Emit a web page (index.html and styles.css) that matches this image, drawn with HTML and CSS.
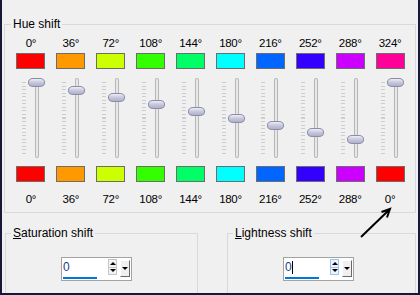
FILE: index.html
```html
<!DOCTYPE html>
<html>
<head>
    <title>Hue / Saturation / Lightness</title>
    <link rel="stylesheet" href="styles.css">
</head>
<body>
<div class="window">
    <!-- Hue shift -->
    <fieldset class="group hue-group">
        <legend>Hue shift</legend>
        <div class="hue-grid">
            <div class="hue-col">
                <div class="deg top">0°</div>
                <div class="swatch" style="background: #ff0000"></div>
                <div class="slider"><div class="ticks"></div><div class="track"><div class="thumb" style="top: 0px"></div></div></div>
                <div class="swatch" style="background: #ff0000"></div>
                <div class="deg bottom">0°</div>
            </div>
            <div class="hue-col">
                <div class="deg top">36°</div>
                <div class="swatch" style="background: #ff9900"></div>
                <div class="slider"><div class="ticks"></div><div class="track"><div class="thumb" style="top: 8px"></div></div></div>
                <div class="swatch" style="background: #ff9900"></div>
                <div class="deg bottom">36°</div>
            </div>
            <div class="hue-col">
                <div class="deg top">72°</div>
                <div class="swatch" style="background: #ccff00"></div>
                <div class="slider"><div class="ticks"></div><div class="track"><div class="thumb" style="top: 15px"></div></div></div>
                <div class="swatch" style="background: #ccff00"></div>
                <div class="deg bottom">72°</div>
            </div>
            <div class="hue-col">
                <div class="deg top">108°</div>
                <div class="swatch" style="background: #33ff00"></div>
                <div class="slider"><div class="ticks"></div><div class="track"><div class="thumb" style="top: 22px"></div></div></div>
                <div class="swatch" style="background: #33ff00"></div>
                <div class="deg bottom">108°</div>
            </div>
            <div class="hue-col">
                <div class="deg top">144°</div>
                <div class="swatch" style="background: #00ff66"></div>
                <div class="slider"><div class="ticks"></div><div class="track"><div class="thumb" style="top: 29px"></div></div></div>
                <div class="swatch" style="background: #00ff66"></div>
                <div class="deg bottom">144°</div>
            </div>
            <div class="hue-col">
                <div class="deg top">180°</div>
                <div class="swatch" style="background: #00ffff"></div>
                <div class="slider"><div class="ticks"></div><div class="track"><div class="thumb" style="top: 36px"></div></div></div>
                <div class="swatch" style="background: #00ffff"></div>
                <div class="deg bottom">180°</div>
            </div>
            <div class="hue-col">
                <div class="deg top">216°</div>
                <div class="swatch" style="background: #0066ff"></div>
                <div class="slider"><div class="ticks"></div><div class="track"><div class="thumb" style="top: 43px"></div></div></div>
                <div class="swatch" style="background: #0066ff"></div>
                <div class="deg bottom">216°</div>
            </div>
            <div class="hue-col">
                <div class="deg top">252°</div>
                <div class="swatch" style="background: #3300ff"></div>
                <div class="slider"><div class="ticks"></div><div class="track"><div class="thumb" style="top: 50px"></div></div></div>
                <div class="swatch" style="background: #3300ff"></div>
                <div class="deg bottom">252°</div>
            </div>
            <div class="hue-col">
                <div class="deg top">288°</div>
                <div class="swatch" style="background: #cc00ff"></div>
                <div class="slider"><div class="ticks"></div><div class="track"><div class="thumb" style="top: 57px"></div></div></div>
                <div class="swatch" style="background: #cc00ff"></div>
                <div class="deg bottom">288°</div>
            </div>
            <div class="hue-col">
                <div class="deg top">324°</div>
                <div class="swatch" style="background: #ff0099"></div>
                <div class="slider"><div class="ticks"></div><div class="track"><div class="thumb" style="top: 0px"></div></div></div>
                <div class="swatch" style="background: #ff0000"></div>
                <div class="deg bottom">0°</div>
            </div>
        </div>
    </fieldset>

    <!-- Saturation / Lightness -->
    <div class="bottom-row">
        <fieldset class="group shift-group sat-group">
            <legend><u>S</u>aturation shift</legend>
            <div class="spin">
                <div class="spin-field"><span class="spin-value">0</span></div>
                <div class="updown"><span class="up"></span><span class="down"></span></div>
                <div class="drop"></div>
            </div>
        </fieldset>
        <fieldset class="group shift-group light-group">
            <legend><u>L</u>ightness shift</legend>
            <div class="spin">
                <div class="spin-field"><span class="spin-value">0<span class="caret"></span></span></div>
                <div class="updown hot"><span class="up"></span><span class="down"></span></div>
                <div class="drop"></div>
            </div>
        </fieldset>
    </div>
</div>

<!-- annotation arrow -->
<svg class="annotation" width="420" height="295" viewBox="0 0 420 295">
    <path d="M361 237 L390 209 M381.5 212 L390 209 L387 217.5" fill="none" stroke="#000" stroke-width="2"/>
</svg>
</body>
</html>
```

FILE: styles.css
```css
* { box-sizing: border-box; }
body { margin: 0; position: relative; font-family: "Liberation Sans", Arial, sans-serif; font-size: 12px; color: #000; }

.window {
    width: 420px;
    height: 295px;
    background: #f0f0f0;
    border: 2px solid #17173a;
    border-top: 0;
    overflow: hidden;
}

.group { margin: 0; min-width: 0; border: 1px solid #d9d9d9; }
.group legend { padding: 0 2px; line-height: 15px; }

.hue-group { margin: 17px 2px 0; padding: 5px 5px 6px 6px; }
.hue-grid { display: grid; grid-template-columns: repeat(10, 1fr); }
.hue-col { display: flex; flex-direction: column; align-items: center; }

.deg { font-size: 11.5px; line-height: 13px; letter-spacing: -0.3px; white-space: nowrap; }
.deg.top { margin-bottom: 3px; }
.deg.bottom { margin-top: 11px; }

.swatch { width: 29px; height: 16px; border: 1px solid #6d6d6d; }

.slider {
    align-self: stretch;
    display: flex;
    gap: 9px;
    height: 80px;
    margin: 9px 0 8px;
    padding-left: 11px;
}
.ticks {
    width: 4px;
    height: 72px;
    margin-top: 4px;
    background: repeating-linear-gradient(to bottom, #cdcdcd 0 1px, transparent 1px 3.55px);
}
.track {
    position: relative;
    width: 4px;
    background: #e7e7e7;
    box-shadow: inset 0 0 0 1px #b7b7b7;
    border-radius: 2px;
}
.thumb {
    position: absolute;
    left: -7px;
    width: 17px;
    height: 9px;
    border: 1px solid #8b8da5;
    border-radius: 5px / 4px;
    background: linear-gradient(#eeeef6, #c9cadf 45%, #afb1ca);
}

.bottom-row { display: flex; gap: 29px; margin: 13px 0 0 3px; }
.shift-group { height: 90px; padding: 16px 0 0 5px; }
.sat-group { width: 193px; }
.light-group { width: 189px; }

.spin {
    display: flex;
    align-items: flex-start;
    width: 71px;
    height: 24px;
    margin-left: 50px;
    background: #fff;
    border: 1px solid #a3a3a3;
}
.spin-field { width: 45px; padding: 3px 0 0 1px; }
.spin-value {
    display: block;
    width: 34px;
    line-height: 13px;
    padding-bottom: 3px;
    color: #1d3f86;
    border-bottom: 2px solid #0078d7;
}
.caret { display: inline-block; width: 1px; height: 13px; background: #000; vertical-align: top; }

.updown {
    display: flex;
    flex-direction: column;
    width: 9px;
    height: 16px;
    margin: 1px 0 0 1px;
    border: 1px solid #c6c6c6;
    background: #f3f3f3;
}
.updown.hot { border-color: #9cc6ee; background: #eaf3fc; }
.up, .down { flex: 1; display: flex; align-items: center; justify-content: center; }
.up { border-bottom: 1px solid #c6c6c6; }
.updown.hot .up { border-bottom-color: #9cc6ee; }
.up::before { content: ""; border: 3px solid transparent; border-top: 0; border-bottom: 3px solid #000; }
.down::before { content: ""; border: 3px solid transparent; border-bottom: 0; border-top: 3px solid #000; }

.drop {
    display: flex;
    align-items: center;
    justify-content: center;
    width: 10px;
    height: 17px;
    margin: 2px 0 0 3px;
    background: #f0f0f0;
    border: 1px solid;
    border-color: #fff #696969 #696969 #fff;
}
.drop::before { content: ""; border: 3px solid transparent; border-bottom: 0; border-top: 3px solid #000; }

.annotation { position: absolute; left: 0; top: 0; pointer-events: none; }
```
